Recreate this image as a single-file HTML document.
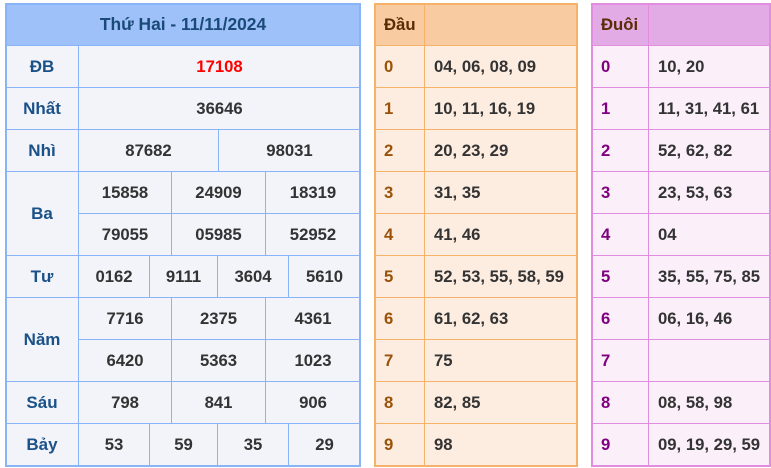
<!DOCTYPE html>
<html><head><meta charset="utf-8"><style>
body{margin:0;width:771px;height:468px;background:#fff;position:relative;overflow:hidden;font-family:"Liberation Sans",sans-serif}
.c{position:absolute;box-sizing:border-box;border:1px solid #8ab4f8;display:flex;align-items:center;justify-content:center;font-weight:bold;font-size:16.7px;color:#333;background:#f3f4f9}
.l{color:#1a5188;font-size:17px}
.f{position:absolute;box-sizing:border-box;border:2px solid #8ab4f8;background:transparent}
.o{border-color:#f6b26b;background:#fdece0;justify-content:flex-start;padding-left:9px}
.p{border-color:#e28ee0;background:#fbeffa;justify-content:flex-start;padding-left:9px}
.od{color:#9a5208}.pd{color:#800080}
</style></head><body>
<!-- table 1 -->
<div class="c" style="left:5px;top:3px;width:356px;height:43px;background:#9ec1f9;color:#1a4a78;font-size:17.4px">Thứ Hai - 11/11/2024</div>
<div class="c l" style="left:5px;top:45px;width:74px;height:43px">ĐB</div>
<div class="c" style="left:78px;top:45px;width:283px;height:43px;color:#f00">17108</div>
<div class="c l" style="left:5px;top:87px;width:74px;height:43px">Nhất</div>
<div class="c" style="left:78px;top:87px;width:283px;height:43px">36646</div>
<div class="c l" style="left:5px;top:129px;width:74px;height:43px">Nhì</div>
<div class="c" style="left:78px;top:129px;width:141px;height:43px">87682</div>
<div class="c" style="left:218px;top:129px;width:143px;height:43px">98031</div>
<div class="c l" style="left:5px;top:171px;width:74px;height:85px">Ba</div>
<div class="c" style="left:78px;top:171px;width:94px;height:43px">15858</div>
<div class="c" style="left:171px;top:171px;width:95px;height:43px">24909</div>
<div class="c" style="left:265px;top:171px;width:96px;height:43px">18319</div>
<div class="c" style="left:78px;top:213px;width:94px;height:43px">79055</div>
<div class="c" style="left:171px;top:213px;width:95px;height:43px">05985</div>
<div class="c" style="left:265px;top:213px;width:96px;height:43px">52952</div>
<div class="c l" style="left:5px;top:255px;width:74px;height:43px">Tư</div>
<div class="c" style="left:78px;top:255px;width:72px;height:43px">0162</div>
<div class="c" style="left:149px;top:255px;width:69px;height:43px">9111</div>
<div class="c" style="left:217px;top:255px;width:72px;height:43px">3604</div>
<div class="c" style="left:288px;top:255px;width:73px;height:43px">5610</div>
<div class="c l" style="left:5px;top:297px;width:74px;height:85px">Năm</div>
<div class="c" style="left:78px;top:297px;width:94px;height:43px">7716</div>
<div class="c" style="left:171px;top:297px;width:95px;height:43px">2375</div>
<div class="c" style="left:265px;top:297px;width:96px;height:43px">4361</div>
<div class="c" style="left:78px;top:339px;width:94px;height:43px">6420</div>
<div class="c" style="left:171px;top:339px;width:95px;height:43px">5363</div>
<div class="c" style="left:265px;top:339px;width:96px;height:43px">1023</div>
<div class="c l" style="left:5px;top:381px;width:74px;height:43px">Sáu</div>
<div class="c" style="left:78px;top:381px;width:94px;height:43px">798</div>
<div class="c" style="left:171px;top:381px;width:95px;height:43px">841</div>
<div class="c" style="left:265px;top:381px;width:96px;height:43px">906</div>
<div class="c l" style="left:5px;top:423px;width:74px;height:43px">Bảy</div>
<div class="c" style="left:78px;top:423px;width:72px;height:43px">53</div>
<div class="c" style="left:149px;top:423px;width:69px;height:43px">59</div>
<div class="c" style="left:217px;top:423px;width:72px;height:43px">35</div>
<div class="c" style="left:288px;top:423px;width:73px;height:43px">29</div>
<div class="f" style="left:5px;top:3px;width:356px;height:464px"></div>

<!-- table 2 -->
<div class="c o" style="left:374px;top:3px;width:51px;height:43px;background:#f9cba0;color:#5a2c06">Đầu</div>
<div class="c o" style="left:424px;top:3px;width:154px;height:43px;background:#f9cba0"></div>
<div class="c o od" style="left:374px;top:45px;width:51px;height:43px">0</div><div class="c o" style="left:424px;top:45px;width:154px;height:43px">04, 06, 08, 09</div>
<div class="c o od" style="left:374px;top:87px;width:51px;height:43px">1</div><div class="c o" style="left:424px;top:87px;width:154px;height:43px">10, 11, 16, 19</div>
<div class="c o od" style="left:374px;top:129px;width:51px;height:43px">2</div><div class="c o" style="left:424px;top:129px;width:154px;height:43px">20, 23, 29</div>
<div class="c o od" style="left:374px;top:171px;width:51px;height:43px">3</div><div class="c o" style="left:424px;top:171px;width:154px;height:43px">31, 35</div>
<div class="c o od" style="left:374px;top:213px;width:51px;height:43px">4</div><div class="c o" style="left:424px;top:213px;width:154px;height:43px">41, 46</div>
<div class="c o od" style="left:374px;top:255px;width:51px;height:43px">5</div><div class="c o" style="left:424px;top:255px;width:154px;height:43px">52, 53, 55, 58, 59</div>
<div class="c o od" style="left:374px;top:297px;width:51px;height:43px">6</div><div class="c o" style="left:424px;top:297px;width:154px;height:43px">61, 62, 63</div>
<div class="c o od" style="left:374px;top:339px;width:51px;height:43px">7</div><div class="c o" style="left:424px;top:339px;width:154px;height:43px">75</div>
<div class="c o od" style="left:374px;top:381px;width:51px;height:43px">8</div><div class="c o" style="left:424px;top:381px;width:154px;height:43px">82, 85</div>
<div class="c o od" style="left:374px;top:423px;width:51px;height:43px">9</div><div class="c o" style="left:424px;top:423px;width:154px;height:43px">98</div>
<div class="f" style="left:374px;top:3px;width:204px;height:464px;border-color:#f6b26b"></div>

<!-- table 3 -->
<div class="c p" style="left:591px;top:3px;width:58px;height:43px;background:#e3abe6;color:#5a2c06">Đuôi</div>
<div class="c p" style="left:648px;top:3px;width:123px;height:43px;background:#e3abe6"></div>
<div class="c p pd" style="left:591px;top:45px;width:58px;height:43px">0</div><div class="c p" style="left:648px;top:45px;width:123px;height:43px">10, 20</div>
<div class="c p pd" style="left:591px;top:87px;width:58px;height:43px">1</div><div class="c p" style="left:648px;top:87px;width:123px;height:43px">11, 31, 41, 61</div>
<div class="c p pd" style="left:591px;top:129px;width:58px;height:43px">2</div><div class="c p" style="left:648px;top:129px;width:123px;height:43px">52, 62, 82</div>
<div class="c p pd" style="left:591px;top:171px;width:58px;height:43px">3</div><div class="c p" style="left:648px;top:171px;width:123px;height:43px">23, 53, 63</div>
<div class="c p pd" style="left:591px;top:213px;width:58px;height:43px">4</div><div class="c p" style="left:648px;top:213px;width:123px;height:43px">04</div>
<div class="c p pd" style="left:591px;top:255px;width:58px;height:43px">5</div><div class="c p" style="left:648px;top:255px;width:123px;height:43px">35, 55, 75, 85</div>
<div class="c p pd" style="left:591px;top:297px;width:58px;height:43px">6</div><div class="c p" style="left:648px;top:297px;width:123px;height:43px">06, 16, 46</div>
<div class="c p pd" style="left:591px;top:339px;width:58px;height:43px">7</div><div class="c p" style="left:648px;top:339px;width:123px;height:43px"></div>
<div class="c p pd" style="left:591px;top:381px;width:58px;height:43px">8</div><div class="c p" style="left:648px;top:381px;width:123px;height:43px">08, 58, 98</div>
<div class="c p pd" style="left:591px;top:423px;width:58px;height:43px">9</div><div class="c p" style="left:648px;top:423px;width:123px;height:43px">09, 19, 29, 59</div>
<div class="f" style="left:591px;top:3px;width:180px;height:464px;border-color:#e28ee0"></div>
</body></html>
